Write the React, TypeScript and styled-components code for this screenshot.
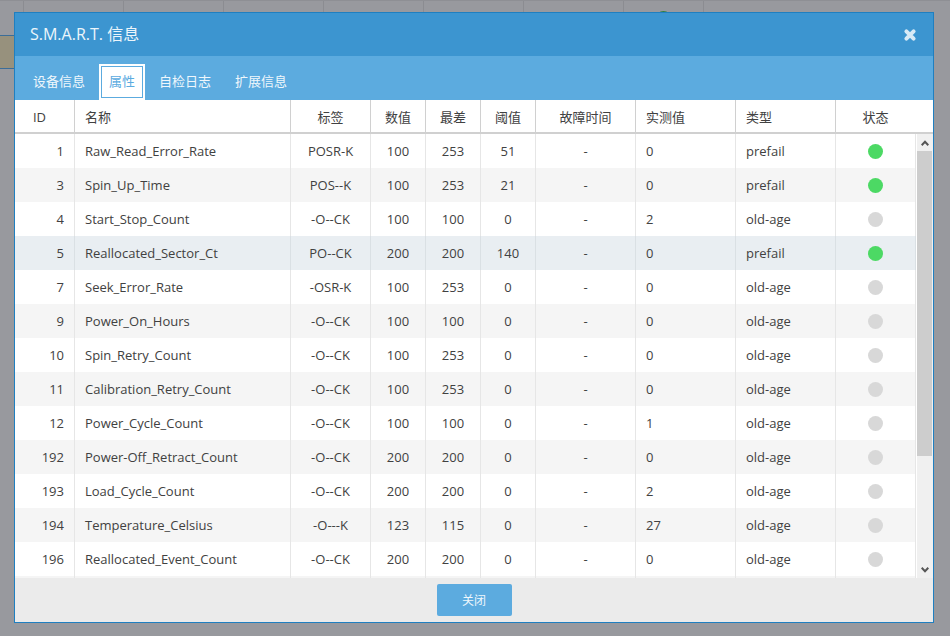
import React, { useState } from "react";
import styled, { createGlobalStyle } from "styled-components";

const GlobalStyle = createGlobalStyle`
  * { box-sizing: border-box; }
  body {
    margin: 0;
    background: #98999e;
    color: #414b55;
    font: 13px/18px "Open Sans", "Noto Sans CJK SC", sans-serif;
  }
  button { font: inherit; border: 0; padding: 0; cursor: pointer; }
`;

const Screen = styled.div`
  position: relative;
  height: 100vh;
  overflow: hidden;
`;

const Backdrop = styled.div`
  position: absolute;
  inset: 0;
`;

const BackdropHeader = styled.div`
  display: grid;
  grid-template-columns: 24px repeat(6, 100px) 80px;
  height: 35px;
  border-top: 1px solid #8e8f94;
`;

const BackdropCell = styled.div`
  display: flex;
  justify-content: center;
  align-items: center;
  border-right: 1px solid #8b8c91;
`;

const BackdropDot = styled.span`
  width: 15px;
  height: 15px;
  border-radius: 50%;
  background: #2f8040;
`;

const BackdropRow = styled.div`
  height: 34px;
  border: solid #3b6d98;
  border-width: 1px 0;
  background: #97917d;
  width: 60%;
`;

const ModalLayer = styled.div`
  position: relative;
  display: flex;
  height: 100%;
  padding: 12px 16px 13px 14px;
`;

const Dialog = styled.section`
  flex: 1;
  min-width: 0;
  display: flex;
  flex-direction: column;
  border: 1px solid #1f7fc0;
  background: #fff;
`;

const TitleBar = styled.header`
  flex: none;
  display: flex;
  align-items: center;
  justify-content: space-between;
  height: 43px;
  padding: 0 16px 0 15px;
  background: #3c95d0;
`;

const Title = styled.h1`
  margin: 0;
  padding-bottom: 2px;
  color: #ecf5fb;
  font-size: 16px;
  font-weight: 400;
  line-height: 24px;
`;

const CloseIcon = styled.button`
  display: flex;
  width: 14px;
  height: 14px;
  background: none;
  color: #d8eaf6;
`;

const Tabs = styled.nav`
  flex: none;
  display: flex;
  align-items: flex-end;
  gap: 4px;
  height: 44px;
  padding: 0 8px;
  background: #5cabdf;
`;

const Tab = styled.button<{ $active: boolean }>`
  height: 36px;
  padding: 2px;
  background: ${(p) => (p.$active ? "#fff" : "transparent")};
  color: ${(p) => (p.$active ? "#5cabdf" : "#eff7fc")};
`;

const TabLabel = styled.span<{ $active: boolean }>`
  display: flex;
  align-items: center;
  height: 32px;
  padding: 0 7px 2px;
  border: 1px solid ${(p) => (p.$active ? "#5cabdf" : "transparent")};
`;

const HeadWrap = styled.div`
  flex: none;
  padding-right: 17px;
  border-bottom: 2px solid #d0d0d0;
`;

const Table = styled.table`
  width: 100%;
  table-layout: fixed;
  border-collapse: separate;
  border-spacing: 0;
`;

type Align = "left" | "center" | "right";

const HeadCell = styled.th<{ $align: Align }>`
  height: 32px;
  padding: 2px 10px 0;
  border-right: 1px solid #d0d0d0;
  font-weight: 400;
  text-align: ${(p) => p.$align};
  white-space: nowrap;
  color: #414141;
  &:first-child { padding-right: 20px; }
  &:last-child { border-right-color: transparent; }
`;

const BodyWrap = styled.div`
  flex: 1;
  min-height: 0;
  display: flex;
`;

const ScrollArea = styled.div`
  flex: 1;
  min-width: 0;
  overflow-y: auto;
  scrollbar-width: none;
`;

const Row = styled.tr<{ $selected: boolean }>`
  height: 34px;
  background: ${(p) => (p.$selected ? "#e9eef2" : "#fff")};
  &:nth-child(even) { background: ${(p) => (p.$selected ? "#e9eef2" : "#f5f5f5")}; }
  > td { border-right-color: ${(p) => (p.$selected ? "#dae0e4" : "#e6e6e6")}; }
`;

const Cell = styled.td<{ $align: Align }>`
  height: 34px;
  padding: 0 10px;
  border-right: 1px solid #e6e6e6;
  text-align: ${(p) => p.$align};
  white-space: nowrap;
  color: #414141;
`;

const StatusDot = styled.span<{ $on: boolean }>`
  display: block;
  width: 15px;
  height: 15px;
  margin: 0 auto;
  border-radius: 50%;
  background: ${(p) => (p.$on ? "#4cd964" : "#d8d8d8")};
`;

const ScrollBar = styled.div`
  flex: none;
  display: flex;
  flex-direction: column;
  width: 17px;
  border-left: 1px solid #fff;
  background: #f0f0f0;
`;

const ScrollButton = styled.button`
  flex: none;
  display: flex;
  align-items: center;
  justify-content: center;
  height: 17px;
  background: none;
  color: #555;
`;

const Track = styled.div`
  flex: 1;
  padding-right: 1px;
`;

const Thumb = styled.div`
  height: 74.4%;
  background: #cdcdcd;
`;

const Footer = styled.footer`
  flex: none;
  display: flex;
  align-items: center;
  justify-content: center;
  height: 44px;
  background: #ebebeb;
`;

const FooterButton = styled.button`
  width: 75px;
  height: 32px;
  padding-top: 2px;
  border-radius: 2px;
  background: #5cabdf;
  color: #eff7fc;
  font-size: 12px;
`;

const columns: { label: string; width?: number; head: Align; body: Align }[] = [
  { label: "ID", width: 60, head: "center", body: "right" },
  { label: "名称", head: "left", body: "left" },
  { label: "标签", width: 80, head: "center", body: "center" },
  { label: "数值", width: 55, head: "center", body: "center" },
  { label: "最差", width: 55, head: "center", body: "center" },
  { label: "阈值", width: 55, head: "center", body: "center" },
  { label: "故障时间", width: 100, head: "center", body: "center" },
  { label: "实测值", width: 100, head: "left", body: "left" },
  { label: "类型", width: 100, head: "left", body: "left" },
  { label: "状态", width: 80, head: "center", body: "center" },
];

const attributes: string[][] = [
  ["1", "Raw_Read_Error_Rate", "POSR-K", "100", "253", "51", "-", "0", "prefail"],
  ["3", "Spin_Up_Time", "POS--K", "100", "253", "21", "-", "0", "prefail"],
  ["4", "Start_Stop_Count", "-O--CK", "100", "100", "0", "-", "2", "old-age"],
  ["5", "Reallocated_Sector_Ct", "PO--CK", "200", "200", "140", "-", "0", "prefail"],
  ["7", "Seek_Error_Rate", "-OSR-K", "100", "253", "0", "-", "0", "old-age"],
  ["9", "Power_On_Hours", "-O--CK", "100", "100", "0", "-", "0", "old-age"],
  ["10", "Spin_Retry_Count", "-O--CK", "100", "253", "0", "-", "0", "old-age"],
  ["11", "Calibration_Retry_Count", "-O--CK", "100", "253", "0", "-", "0", "old-age"],
  ["12", "Power_Cycle_Count", "-O--CK", "100", "100", "0", "-", "1", "old-age"],
  ["192", "Power-Off_Retract_Count", "-O--CK", "200", "200", "0", "-", "0", "old-age"],
  ["193", "Load_Cycle_Count", "-O--CK", "200", "200", "0", "-", "2", "old-age"],
  ["194", "Temperature_Celsius", "-O---K", "123", "115", "0", "-", "27", "old-age"],
  ["196", "Reallocated_Event_Count", "-O--CK", "200", "200", "0", "-", "0", "old-age"],
];

const tabs = ["设备信息", "属性", "自检日志", "扩展信息"];

const Columns = () => (
  <colgroup>
    {columns.map((c) => (
      <col key={c.label} width={c.width} />
    ))}
  </colgroup>
);

const Chevron = ({ down }: { down?: boolean }) => (
  <svg width="8" height="6" viewBox="0 0 8 6" fill="none" stroke="currentColor" strokeWidth="2">
    <path d={down ? "M0.7 0.8L4 4.2L7.3 0.8" : "M0.7 5.2L4 1.8L7.3 5.2"} />
  </svg>
);

export default function App() {
  const [tab, setTab] = useState(1);
  const [selected, setSelected] = useState("5");

  return (
    <Screen>
      <GlobalStyle />
      <Backdrop aria-hidden="true">
        <BackdropHeader>
          {[0, 1, 2, 3, 4, 5, 6, 7].map((n) => (
            <BackdropCell key={n}>{n === 7 && <BackdropDot />}</BackdropCell>
          ))}
        </BackdropHeader>
        <BackdropRow />
      </Backdrop>
      <ModalLayer>
        <Dialog role="dialog" aria-labelledby="dialog-title">
          <TitleBar>
            <Title id="dialog-title">S.M.A.R.T. 信息</Title>
            <CloseIcon aria-label="关闭窗口">
              <svg width="14" height="14" viewBox="0 0 14 14" stroke="currentColor" strokeWidth="4" strokeLinecap="round">
                <path d="M3.4 3.4L10.6 10.6M10.6 3.4L3.4 10.6" />
              </svg>
            </CloseIcon>
          </TitleBar>
          <Tabs>
            {tabs.map((t, i) => (
              <Tab key={t} $active={tab === i} onClick={() => setTab(i)}>
                <TabLabel $active={tab === i}>{t}</TabLabel>
              </Tab>
            ))}
          </Tabs>
          <HeadWrap>
            <Table>
              <Columns />
              <thead>
                <tr>
                  {columns.map((c) => (
                    <HeadCell key={c.label} scope="col" $align={c.head}>{c.label}</HeadCell>
                  ))}
                </tr>
              </thead>
            </Table>
          </HeadWrap>
          <BodyWrap>
            <ScrollArea>
              <Table>
                <Columns />
                <tbody>
                  {attributes.map((row) => (
                    <Row key={row[0]} $selected={selected === row[0]} onClick={() => setSelected(row[0])}>
                      {row.map((value, i) => (
                        <Cell key={columns[i].label} $align={columns[i].body}>{value}</Cell>
                      ))}
                      <Cell $align="center"><StatusDot $on={row[8] === "prefail"} /></Cell>
                    </Row>
                  ))}
                  <Row $selected={false}>
                    {columns.map((c) => <Cell key={c.label} $align={c.body} />)}
                  </Row>
                </tbody>
              </Table>
            </ScrollArea>
            <ScrollBar>
              <ScrollButton aria-label="向上滚动"><Chevron /></ScrollButton>
              <Track><Thumb /></Track>
              <ScrollButton aria-label="向下滚动"><Chevron down /></ScrollButton>
            </ScrollBar>
          </BodyWrap>
          <Footer>
            <FooterButton>关闭</FooterButton>
          </Footer>
        </Dialog>
      </ModalLayer>
    </Screen>
  );
}
